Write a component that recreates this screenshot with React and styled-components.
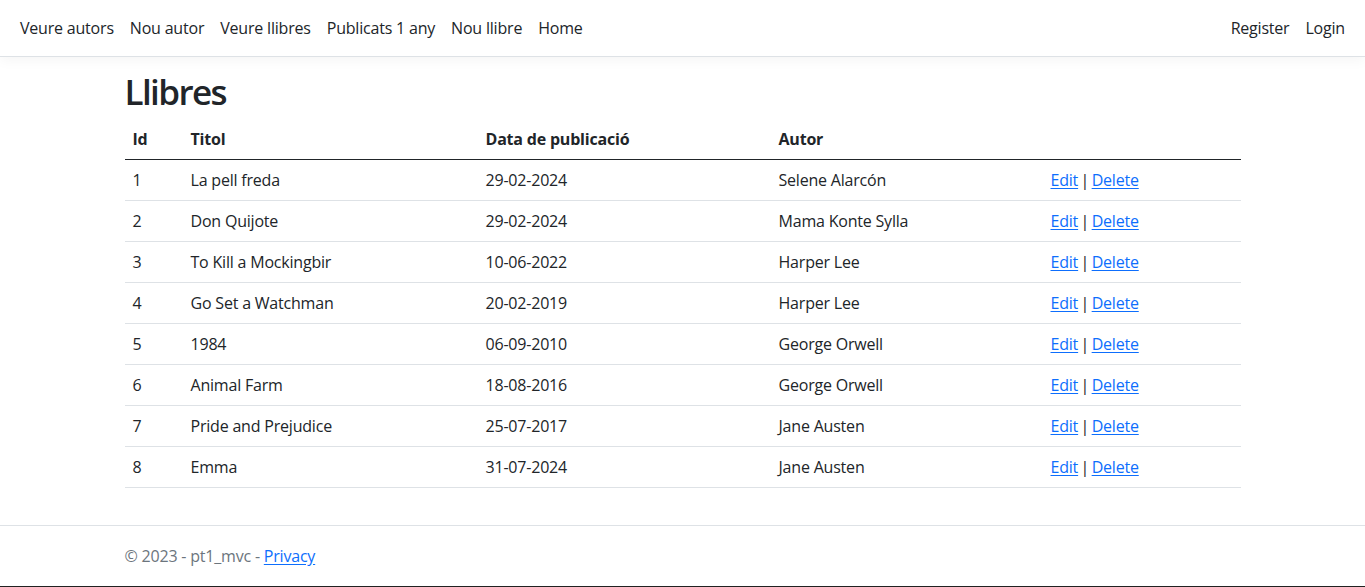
import React from "react";
import styled, { createGlobalStyle } from "styled-components";

const GlobalStyle = createGlobalStyle`
  html, body {
    margin: 0;
    padding: 0;
    background: #ffffff;
  }
  body {
    font-family: "Open Sans", "Noto Sans", sans-serif;
    font-size: 16px;
    line-height: 24px;
    color: #212529;
    letter-spacing: -0.2px;
  }
`;

const Page = styled.div`
  min-height: 587px;
  display: flex;
  flex-direction: column;
`;

const Navbar = styled.nav`
  display: flex;
  justify-content: space-between;
  align-items: center;
  padding: 8px 12px;
  border-bottom: 1px solid #dee2e6;
  box-shadow: 0 4px 12px rgba(0, 0, 0, 0.04);
  background: #ffffff;
`;

const NavGroup = styled.ul`
  display: flex;
  list-style: none;
  margin: 0;
  padding: 0;
`;

const NavLink = styled.a`
  display: block;
  padding: 8px;
  color: #212529;
  text-decoration: none;
  white-space: nowrap;
`;

const Main = styled.main`
  flex: 1;
  width: 1116px;
  margin: 0 auto;
  padding-bottom: 37px;
`;

const Title = styled.h1`
  margin: 11px 0 3px;
  font-size: 35px;
  line-height: 48px;
  font-weight: 600;
  letter-spacing: -1.6px;
`;

const Table = styled.table`
  width: 100%;
  border-collapse: collapse;
  table-layout: fixed;
`;

const Th = styled.th`
  box-sizing: border-box;
  width: ${(p) => p.$w}px;
  text-align: left;
  font-weight: 700;
  padding: 8px;
  border-bottom: 1px solid #212529;
`;

const Td = styled.td`
  padding: 8px;
  border-bottom: 1px solid #dee2e6;
  white-space: nowrap;
  overflow: hidden;
`;

const ActionsTd = styled(Td)`
  word-spacing: -1.5px;
`;

const Link = styled.a`
  color: #0d6efd;
  text-decoration: underline;
  text-underline-offset: 2px;
`;

const Footer = styled.footer`
  border-top: 1px solid #dee2e6;
  border-bottom: 1px solid #212121;
  line-height: 60px;
  color: #6c757d;
  white-space: nowrap;
`;

const FooterInner = styled.div`
  width: 1116px;
  margin: 0 auto;
`;

const books = [
  [1, "La pell freda", "29-02-2024", "Selene Alarcón"],
  [2, "Don Quijote", "29-02-2024", "Mama Konte Sylla"],
  [3, "To Kill a Mockingbir", "10-06-2022", "Harper Lee"],
  [4, "Go Set a Watchman", "20-02-2019", "Harper Lee"],
  [5, "1984", "06-09-2010", "George Orwell"],
  [6, "Animal Farm", "18-08-2016", "George Orwell"],
  [7, "Pride and Prejudice", "25-07-2017", "Jane Austen"],
  [8, "Emma", "31-07-2024", "Jane Austen"],
];

export default function App() {
  return (
    <Page>
      <GlobalStyle />
      <Navbar>
        <NavGroup>
          <li><NavLink href="#">Veure autors</NavLink></li>
          <li><NavLink href="#">Nou autor</NavLink></li>
          <li><NavLink href="#">Veure llibres</NavLink></li>
          <li><NavLink href="#">Publicats 1 any</NavLink></li>
          <li><NavLink href="#">Nou llibre</NavLink></li>
          <li><NavLink href="#">Home</NavLink></li>
        </NavGroup>
        <NavGroup>
          <li><NavLink href="#">Register</NavLink></li>
          <li><NavLink href="#">Login</NavLink></li>
        </NavGroup>
      </Navbar>

      <Main>
        <Title>Llibres</Title>
        <Table>
          <thead>
            <tr>
              <Th $w={58}>Id</Th>
              <Th $w={295}>Titol</Th>
              <Th $w={293}>Data de publicació</Th>
              <Th $w={272}>Autor</Th>
              <Th $w={198}></Th>
            </tr>
          </thead>
          <tbody>
            {books.map(([id, title, date, author]) => (
              <tr key={id}>
                <Td>{id}</Td>
                <Td>{title}</Td>
                <Td>{date}</Td>
                <Td>{author}</Td>
                <ActionsTd>
                  <Link href="#">Edit</Link> | <Link href="#">Delete</Link>
                </ActionsTd>
              </tr>
            ))}
          </tbody>
        </Table>
      </Main>

      <Footer>
        <FooterInner>
          © 2023 - pt1_mvc - <Link href="#">Privacy</Link>
        </FooterInner>
      </Footer>
    </Page>
  );
}
